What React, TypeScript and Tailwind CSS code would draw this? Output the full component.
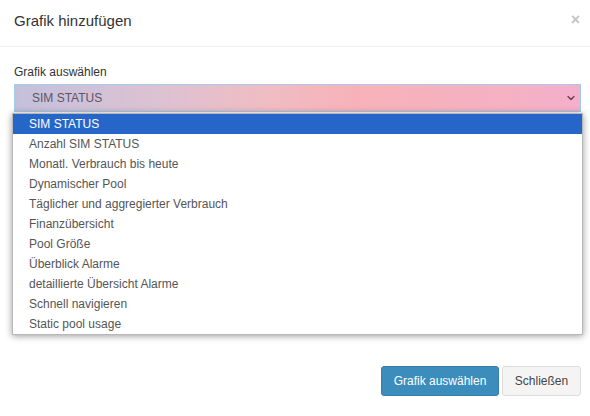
import { ChevronDown } from "lucide-react";

const options = [
  "SIM STATUS",
  "Anzahl SIM STATUS",
  "Monatl. Verbrauch bis heute",
  "Dynamischer Pool",
  "Täglicher und aggregierter Verbrauch",
  "Finanzübersicht",
  "Pool Größe",
  "Überblick Alarme",
  "detaillierte Übersicht Alarme",
  "Schnell navigieren",
  "Static pool usage",
];

export default function App() {
  const selected = 0;

  return (
    <div className="flex h-[416px] w-[590px] flex-col bg-white font-['Liberation_Sans',Arial,sans-serif] text-[#333]">
      <header className="flex h-[47px] items-center justify-between border-b border-[#f0f0f0] pl-[14px] pr-[10px] pb-[6px]">
        <h4 className="text-[15px] leading-none text-[#333]">Grafik hinzufügen</h4>
        <button
          aria-label="Schließen"
          className="text-[16px] font-bold leading-none text-[#c4c4c4]"
        >
          ×
        </button>
      </header>

      <div className="relative flex-1 pl-[14px] pr-[9px] pt-[18px]">
        <label className="block text-[12px] leading-[14px] text-[#333]">
          Grafik auswählen
        </label>

        <div className="mt-[5px] flex h-[28px] items-center justify-between border border-[#a6cbe9] bg-[linear-gradient(90deg,#c4c0dc_0%,#dcc2d2_25%,#f0bcc2_45%,#f7b2b9_60%,#f6b1c2_85%,#f4b0cb_100%)] pl-[17px] pr-[3px]">
          <span className="text-[12px] text-[#5c5566]">SIM STATUS</span>
          <ChevronDown size={12} strokeWidth={2.5} className="text-[#6a3452]" />
        </div>

        <ul className="absolute left-[12px] top-[66px] w-[571px] border border-[#b8b8b8] bg-white shadow-[0_1px_7px_rgba(0,0,0,0.4)]">
          {options.map((option, i) => (
            <li
              key={option}
              className={
                i === selected
                  ? "flex h-[20px] items-center bg-[#2766c9] pl-[16px] text-[12px] text-white"
                  : "flex h-[20px] items-center pl-[16px] text-[12px] text-[#555]"
              }
            >
              {option}
            </li>
          ))}
        </ul>
      </div>

      <footer className="flex justify-end gap-[3px] pb-[20px] pr-[9px]">
        <button className="h-[30px] w-[118px] rounded-[3px] border border-[#367fa9] bg-[#3c8dbc] text-[12px] text-white">
          Grafik auswählen
        </button>
        <button className="h-[30px] w-[79px] rounded-[3px] border border-[#ddd] bg-[#f4f4f4] text-[12px] text-[#444]">
          Schließen
        </button>
      </footer>
    </div>
  );
}
